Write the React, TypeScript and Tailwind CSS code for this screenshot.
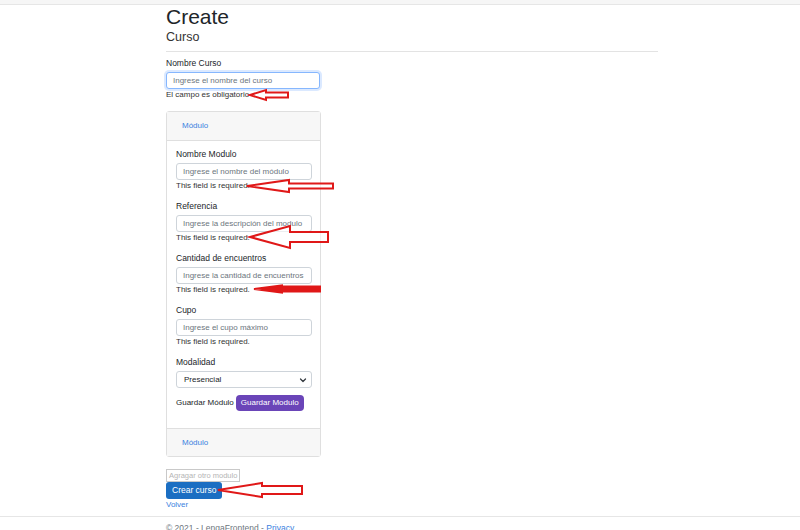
type Arrow = { tip: number; hb: number; tail: number; cy: number; hh: number; sh: number; solid?: boolean };

const arrows: Arrow[] = [
  { tip: 250, hb: 266, tail: 288, cy: 95, hh: 5, sh: 2.5 },
  { tip: 247, hb: 289, tail: 333, cy: 186, hh: 6, sh: 2.5 },
  { tip: 250, hb: 290, tail: 328, cy: 237, hh: 11, sh: 5 },
  { tip: 254, hb: 282, tail: 320, cy: 289, hh: 3.5, sh: 2.5, solid: true },
  { tip: 218, hb: 262, tail: 302, cy: 490, hh: 7, sh: 4 },
];

function arrowPoints(a: Arrow) {
  return [
    [a.tip, a.cy],
    [a.hb, a.cy - a.hh],
    [a.hb, a.cy - a.sh],
    [a.tail, a.cy - a.sh],
    [a.tail, a.cy + a.sh],
    [a.hb, a.cy + a.sh],
    [a.hb, a.cy + a.hh],
  ]
    .map((p) => p.join(','))
    .join(' ');
}

function Field({ label, placeholder }: { label: string; placeholder: string }) {
  return (
    <div className="mt-[9px] first:mt-0">
      <div className="text-[8.5px] leading-[12px] text-[#212529]">{label}</div>
      <div className="mt-[3px] flex h-[17px] w-[136px] items-center whitespace-nowrap rounded-[3px] border border-[#ced4da] bg-white px-[6px] text-[8px] text-[#6c757d]">
        {placeholder}
      </div>
      <div className="text-[8px] leading-[11px] text-[#333]">This field is required.</div>
    </div>
  );
}

export default function App() {
  return (
    <div className="relative h-[530px] w-[800px] overflow-hidden bg-white font-['Liberation_Sans',Arial,sans-serif] text-[#212529]">
      {/* Navbar strip */}
      <div className="h-[5px] border-b border-[#e6e6e6] bg-[#f6f6f6]" />

      <main className="ml-[166px] w-[492px]">
        <h1 className="text-[21px] leading-[24px] text-[#212529]">Create</h1>
        <h4 className="text-[12.5px] leading-[16px] text-[#333]">Curso</h4>
        <hr className="mt-[6px] border-[#e3e3e3]" />

        {/* Nombre curso */}
        <div className="mt-[5px] text-[8.5px] leading-[12px]">Nombre Curso</div>
        <div className="mt-[3px] flex h-[17px] w-[154px] items-center rounded-[3px] border border-[#86b7fe] bg-white px-[6px] text-[8px] text-[#6c757d] shadow-[0_0_0_2px_rgba(13,110,253,0.15)]">
          Ingrese el nombre del curso
        </div>
        <div className="text-[8px] leading-[11px] text-[#333]">El campo es obligatorio</div>

        {/* Card */}
        <div className="mt-[11px] w-[155px] rounded-[3px] border border-[#dfdfdf]">
          <div className="flex h-[29px] items-center border-b border-[#dfdfdf] bg-[#f7f7f7] px-[15px] text-[8px] text-[#3b82e0]">
            Módulo
          </div>
          <div className="px-[9px] pb-[17px] pt-[7px]">
            <Field label="Nombre Modulo" placeholder="Ingrese el nombre del módulo" />
            <Field label="Referencia" placeholder="Ingrese la descripción del modulo" />
            <Field label="Cantidad de encuentros" placeholder="Ingrese la cantidad de encuentros" />
            <Field label="Cupo" placeholder="Ingrese el cupo máximo" />

            <div className="mt-[9px] text-[8.5px] leading-[12px]">Modalidad</div>
            <div className="mt-[3px] flex h-[17px] w-[136px] items-center justify-between rounded-[3px] border border-[#ced4da] bg-white pl-[7px] pr-[4px] text-[8px] text-[#212529]">
              <span>Presencial</span>
              <svg width="8" height="8" viewBox="0 0 16 16" fill="none" stroke="#343a40" strokeWidth="2.5" strokeLinecap="round" strokeLinejoin="round">
                <path d="M3 6l5 5 5-5" />
              </svg>
            </div>

            <div className="mt-[7px] flex items-center gap-[2px] whitespace-nowrap">
              <span className="text-[8px] leading-[16px]">Guardar Módulo</span>
              <button className="h-[16px] flex-none whitespace-nowrap rounded-[4px] bg-[#6a45b8] px-[5px] text-[8px] leading-[16px] text-white">
                Guardar Modulo
              </button>
            </div>
          </div>
          <div className="flex h-[28px] items-center border-t border-[#dfdfdf] bg-[#f7f7f7] px-[15px] text-[8px] text-[#3b82e0]">
            Módulo
          </div>
        </div>

        {/* Actions */}
        <button
          disabled
          className="mt-[12px] block h-[13px] whitespace-nowrap border border-[#c9c9c9] bg-white px-[2px] text-[7.5px] leading-[11px] text-[#b5b5b5]"
        >
          Agragar otro modulo
        </button>
        <button className="block h-[17px] rounded-[3px] bg-[#1b6ec2] px-[6px] text-[8.5px] leading-[17px] text-white">
          Crear curso
        </button>
        <a className="block text-[8px] leading-[11px] text-[#3b82e0]">Volver</a>
      </main>

      {/* Footer */}
      <footer className="mt-[6px] border-t border-[#e6e6e6] pl-[166px] pt-[5px] text-[8.5px] leading-[12px] text-[#6c757d]">
        © 2021 - LengaFrontend - <a className="text-[#3b82e0]">Privacy</a>
      </footer>

      {/* Annotation arrows */}
      <svg className="pointer-events-none absolute left-0 top-0" width="800" height="530">
        {arrows.map((a, i) => (
          <polygon
            key={i}
            points={arrowPoints(a)}
            fill={a.solid ? '#e01818' : 'rgba(255,255,255,0.6)'}
            stroke="#e01818"
            strokeWidth="2"
            strokeLinejoin="miter"
          />
        ))}
      </svg>
    </div>
  );
}
